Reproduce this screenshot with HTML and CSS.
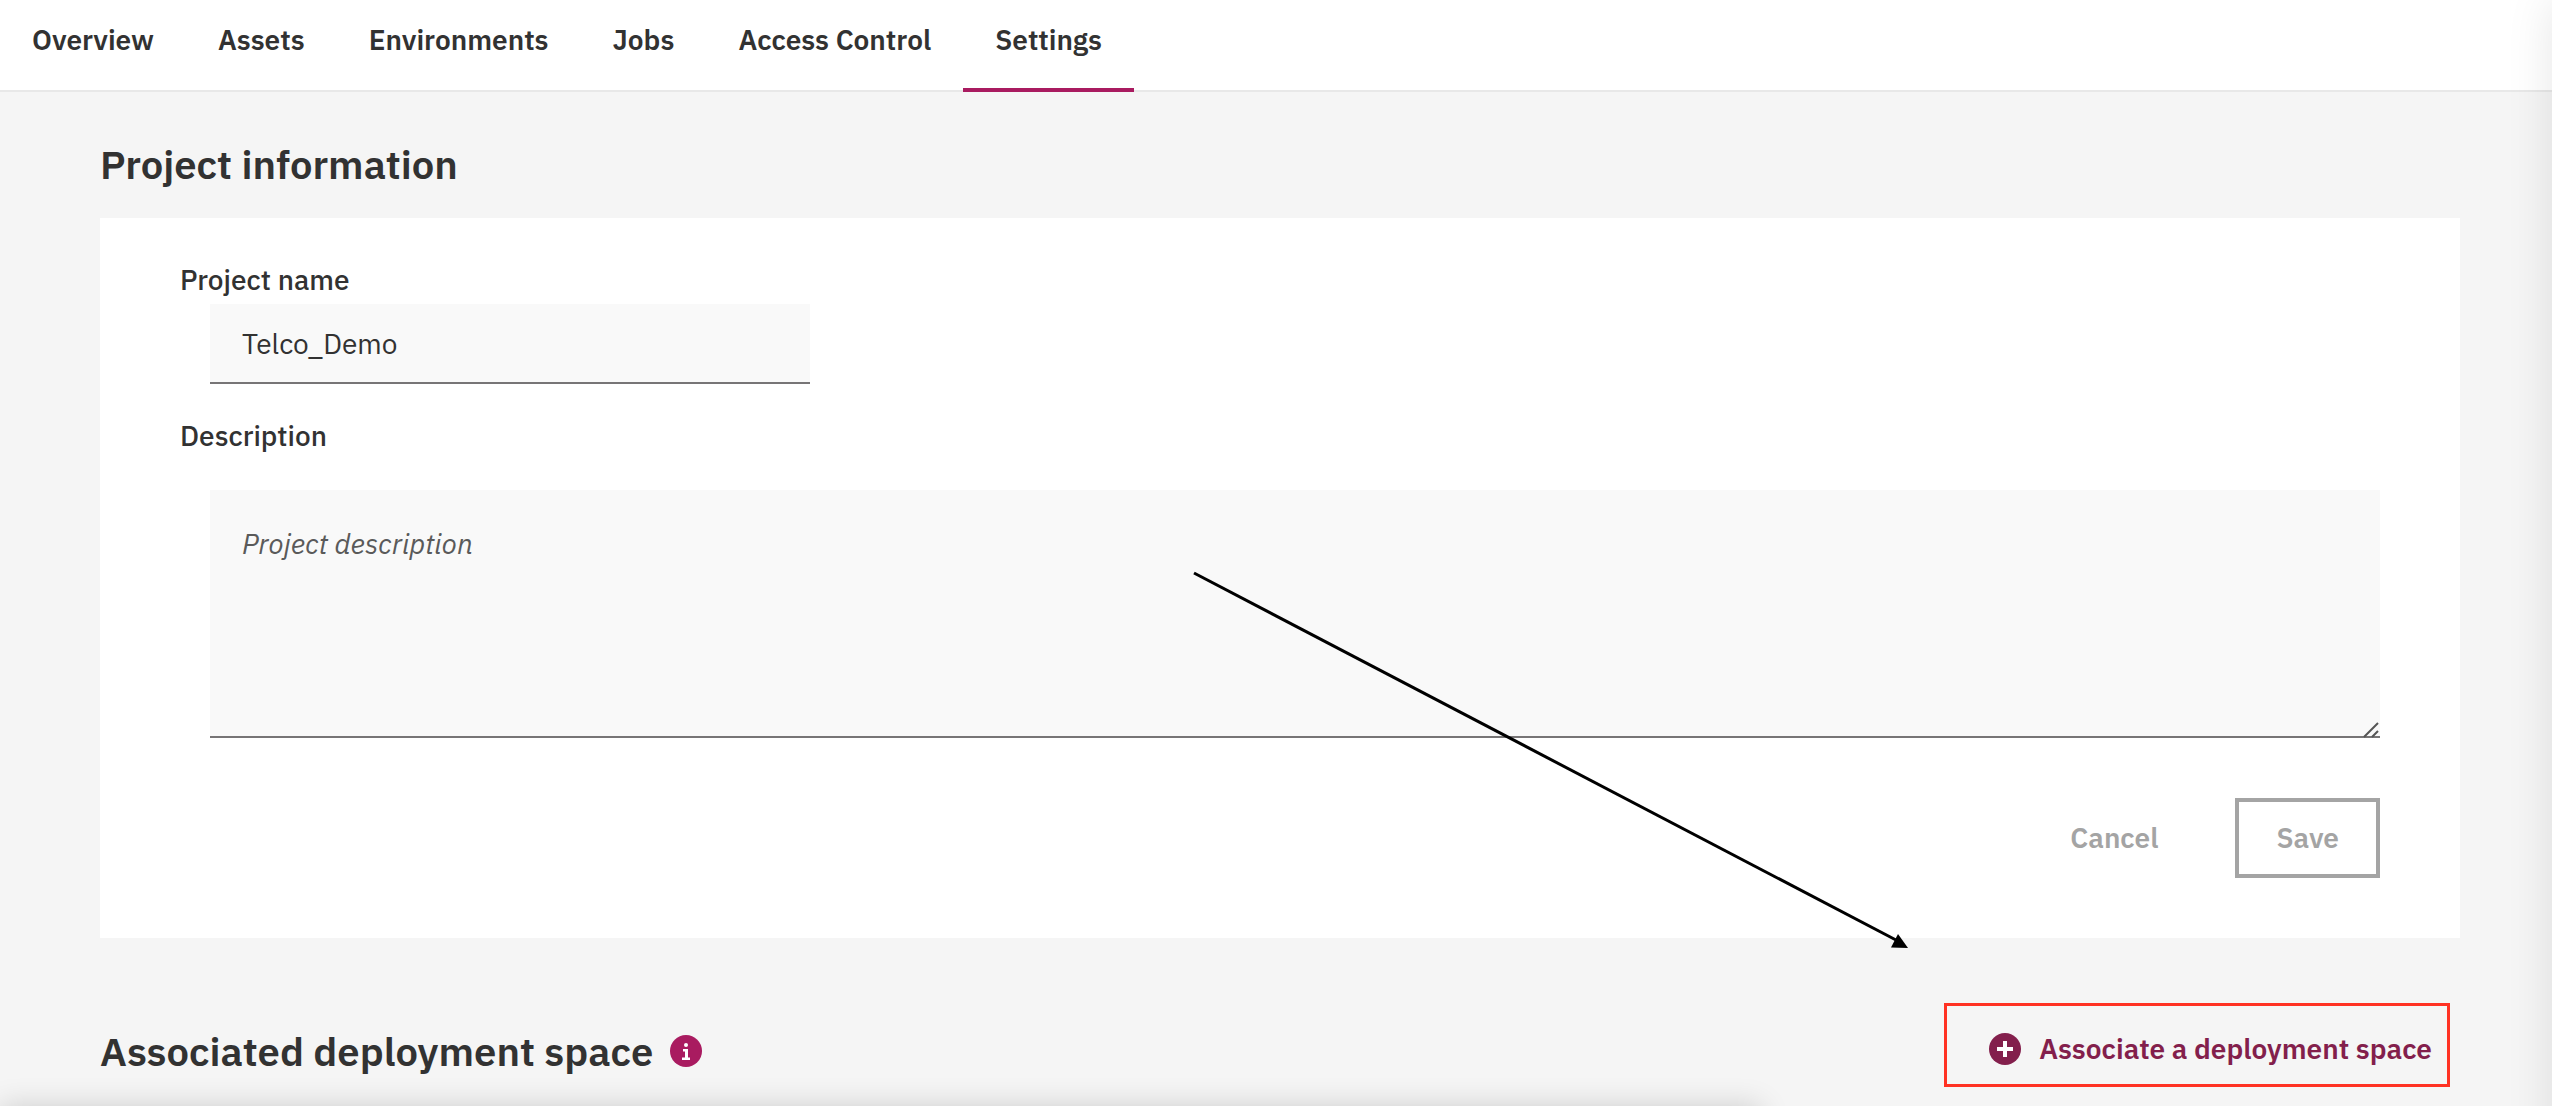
FILE: index.html
```html
<!DOCTYPE html>
<html lang="en">
<head>
<meta charset="utf-8">
<title>Project settings</title>
<meta name="viewport" content="width=device-width, initial-scale=1">
<link rel="stylesheet" href="styles.css">
</head>
<body>
<nav class="tabs" aria-label="Project">
  <a class="tab" href="#overview">Overview</a>
  <a class="tab" href="#assets">Assets</a>
  <a class="tab" href="#environments">Environments</a>
  <a class="tab" href="#jobs">Jobs</a>
  <a class="tab" href="#access">Access Control</a>
  <a class="tab tab-active" href="#settings" aria-current="page">Settings</a>
</nav>
<main class="content">
  <h1 class="title">Project information</h1>
  <form class="panel">
    <label class="label" for="name">Project name</label>
    <input class="field name-field" id="name" type="text" value="Telco_Demo">
    <label class="label description-label" for="description">Description</label>
    <div class="description">
      <textarea class="field description-field" id="description" placeholder="Project description"></textarea>
      <svg class="grip" width="18" height="18" viewBox="0 0 18 18" aria-hidden="true"><path d="M2 17 16 3M10 17l6-6" fill="none" stroke="#555" stroke-width="2"/></svg>
    </div>
    <div class="actions">
      <button class="button" type="button" disabled>Cancel</button>
      <button class="button button-outlined" type="submit" disabled>Save</button>
    </div>
  </form>
  <section class="space">
    <div class="space-heading">
      <h2 class="title">Associated deployment space</h2>
      <svg class="info" width="32" height="32" viewBox="0 0 32 32" role="img" aria-label="Information"><circle cx="16" cy="16" r="16" fill="#a91b60"/><circle cx="16" cy="10" r="2" fill="#fff"/><path d="M13 14h5v8.500h2V25h-8v-2.500h3V16.500h-2z" fill="#fff"/></svg>
    </div>
    <div class="callout">
      <button class="associate" type="button">
        <svg width="32" height="32" viewBox="0 0 32 32" aria-hidden="true"><circle cx="16" cy="16" r="16" fill="#831f4c"/><path d="M14 8h4v6h6v4h-6v6h-4v-6H8v-4h6z" fill="#fff"/></svg>
        Associate a deployment space
      </button>
    </div>
  </section>
</main>
<svg class="arrow" width="720" height="380" viewBox="0 0 720 380" aria-hidden="true"><path d="M4 4 706 371" fill="none" stroke="#000" stroke-width="3"/><path d="M708 365 718 379 701 378.500z" fill="#000"/></svg>
<div class="edge edge-right"></div>
<div class="edge edge-bottom"></div>
</body>
</html>
```

FILE: styles.css
```css
* {
  box-sizing: border-box;
}

body {
  margin: 0;
  min-height: 100vh;
  position: relative;
  overflow-x: hidden;
  background: #f5f5f5;
  color: #323232;
  font-family: "IBM Plex Sans", Roboto, sans-serif;
  font-size: 28px;
  line-height: 36px;
}

button,
input,
textarea {
  font: inherit;
  color: inherit;
}

.tabs {
  display: flex;
  height: 92px;
  background: #fff;
  border-bottom: 2px solid #e8e8e8;
}

.tab {
  height: 92px;
  padding: 22px 32px 0;
  color: inherit;
  font-weight: 600;
  text-decoration: none;
}

.tab-active {
  border-bottom: 4px solid #a91b60;
}

.content {
  padding: 46px 92px 0 100px;
}

.title {
  margin: 0;
  font-size: 40px;
  line-height: 52px;
  font-weight: 600;
}

.panel {
  margin-top: 28px;
  padding: 44px 80px 60px;
  background: #fff;
}

.label {
  display: block;
  font-weight: 500;
}

.field {
  display: block;
  margin: 0 0 0 30px;
  border: 0;
  border-bottom: 2px solid #777576;
  border-radius: 0;
  background: #f9f9f9;
  outline: none;
}

.name-field {
  width: 600px;
  height: 80px;
  margin-top: 6px;
  padding: 0 32px;
}

.description-label {
  margin-top: 34px;
}

.description {
  position: relative;
  margin-top: 36px;
}

.description-field {
  width: calc(100% - 30px);
  height: 248px;
  padding: 36px 32px;
  resize: none;
}

.description-field::placeholder {
  color: #5a5a5a;
  font-style: italic;
  opacity: 1;
}

.grip {
  position: absolute;
  right: 0;
  bottom: 0;
}

.actions {
  display: flex;
  justify-content: flex-end;
  gap: 36px;
  margin-top: 60px;
}

.button {
  height: 80px;
  padding: 0 37px;
  border: 4px solid transparent;
  background: none;
  color: #a4a4a4;
  font-weight: 600;
}

.button-outlined {
  border-color: #a4a4a4;
}

.space {
  display: flex;
  align-items: center;
  justify-content: space-between;
  margin-top: 65px;
  padding-right: 10px;
}

.space-heading {
  display: flex;
  align-items: center;
  gap: 17px;
  padding-top: 12px;
}

.callout {
  border: 3px solid #ff3223;
}

.associate {
  display: flex;
  align-items: center;
  gap: 18px;
  height: 78px;
  padding: 8px 15px 0 42px;
  border: 0;
  background: none;
  color: #831f4c;
  font-weight: 600;
}

.arrow {
  position: absolute;
  top: 569px;
  left: 1190px;
}

.edge {
  position: fixed;
  pointer-events: none;
}

.edge-right {
  top: 0;
  left: 100%;
  width: 200px;
  height: 200%;
  box-shadow: 0 0 44px rgba(0, 0, 0, 0.1);
}

.edge-bottom {
  top: 100%;
  left: 0;
  width: 69%;
  height: 200px;
  box-shadow: 0 0 28px rgba(0, 0, 0, 0.16);
}
```
